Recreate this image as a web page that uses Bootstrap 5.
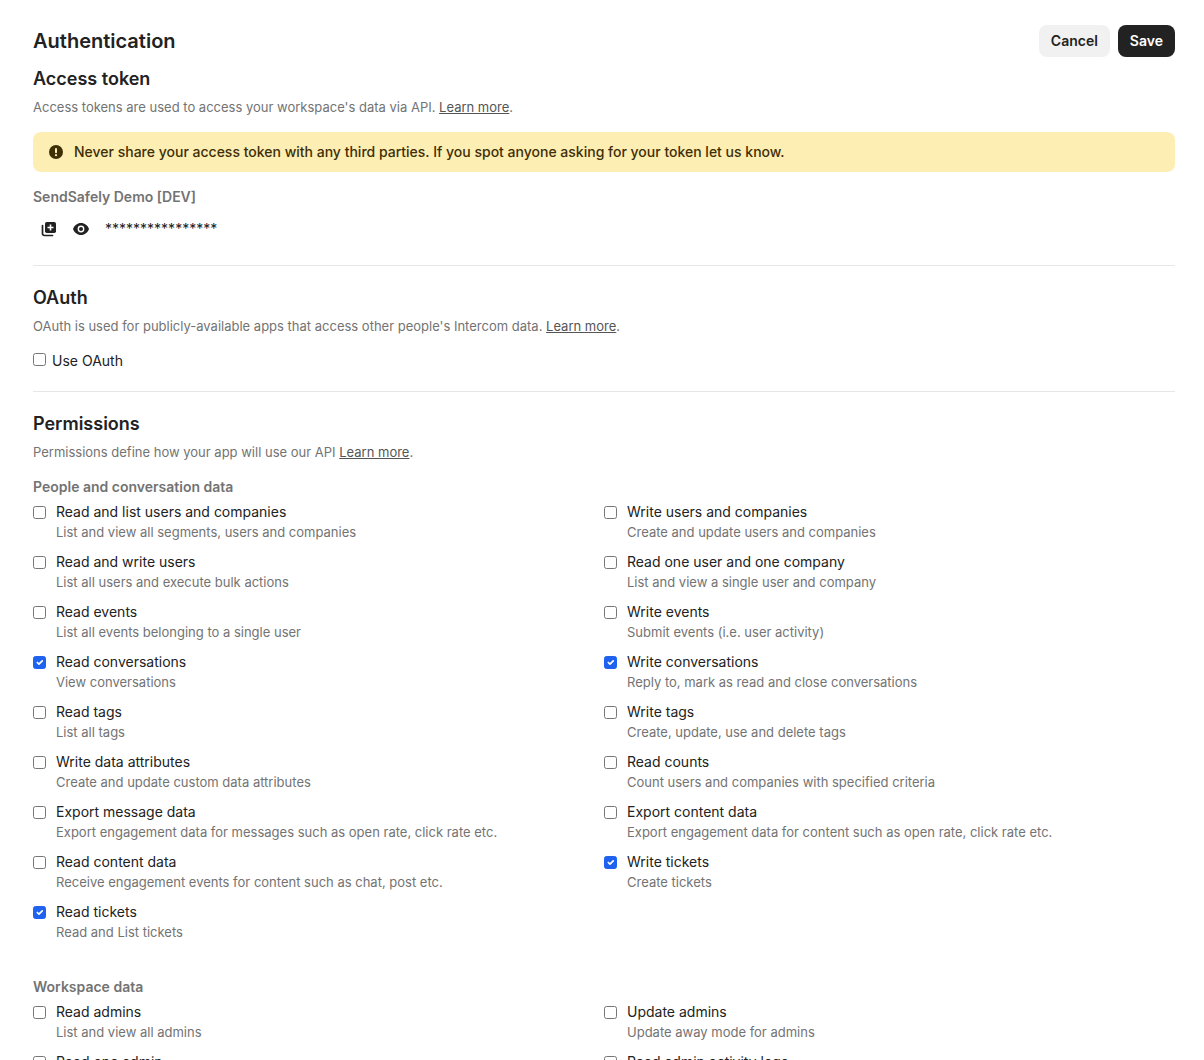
<!DOCTYPE html>
<html lang="en">
<head>
  <meta charset="utf-8" />
  <meta name="viewport" content="width=device-width, initial-scale=1" />
  <title>Authentication</title>
  <link href="https://cdn.jsdelivr.net/npm/bootstrap@5.3.3/dist/css/bootstrap.min.css" rel="stylesheet">
  <style>
    html, body { height: 100%; overflow: hidden; }
    body { font-family: Inter, "Liberation Sans", sans-serif; font-size: 14px; line-height: 20px; color: #222; background: #fff; }
    .page-wrap { padding: 25px 29px 0 33px; }
    .page-title { font-size: 20px; line-height: 32px; font-weight: 600; margin: 0; }
    .btn-cancel, .btn-save { font-size: 14px; font-weight: 600; line-height: 20px; padding: 6px 12px; border-radius: 8px; border: 0; height: 32px; }
    .btn-cancel { background: #f1f1f1; color: #222; }
    .btn-save { background: #222; color: #fff; }
    .section-title { font-size: 18px; line-height: 24px; font-weight: 600; margin: 0; }
    .section-help { font-size: 13px; line-height: 20px; color: #737373; margin: 6px 0 0; }
    .section-help a { color: #555; }
    .token-warning { background: #fdeeb4; color: #3f2f06; border-radius: 8px; height: 40px; padding: 0 16px; margin-top: 15px; font-weight: 500; gap: 11px; }
    .workspace-name { font-weight: 600; color: #737373; margin-top: 15px; }
    .token-row { height: 24px; margin-top: 10px; padding-left: 8px; gap: 16px; }
    .token-stars { font-size: 14px; margin-left: 0; color: #222; }
    .divider { border: 0; border-top: 1px solid #e6e6e6; opacity: 1; margin: 0; }
    .group-title { font-weight: 600; color: #737373; }
    .perm-box.form-check-input { width: 13px; height: 13px; margin: 0; flex: none; border: 1px solid #767676; border-radius: 2.5px; }
    .perm-box.form-check-input:checked { background-color: #1f62f0; border-color: #1f62f0; }
    .perm-item { height: 50px; gap: 10px; }
    .perm-item .perm-box { margin-top: 4px; }
    .perm-name { display: block; line-height: 20px; color: #222; }
    .perm-desc { display: block; font-size: 13px; line-height: 20px; color: #737373; }
  </style>
</head>
<body>
  <div class="page-wrap">
    <header class="d-flex justify-content-between align-items-center">
      <h1 class="page-title">Authentication</h1>
      <div class="d-flex gap-2 me-0">
        <button type="button" class="btn btn-cancel">Cancel</button>
        <button type="button" class="btn btn-save">Save</button>
      </div>
    </header>

    <section style="margin-top:10px">
      <h2 class="section-title">Access token</h2>
      <p class="section-help">Access tokens are used to access your workspace's data via API. <a href="#">Learn more</a>.</p>
      <div class="token-warning d-flex align-items-center">
        <svg width="14" height="14" viewBox="0 0 14 14"><circle cx="7" cy="7" r="7" fill="#3f2f06"/><rect x="6" y="3" width="2" height="5.2" rx="1" fill="#fdeeb4"/><circle cx="7" cy="10.2" r="1.1" fill="#fdeeb4"/></svg>
        <span>Never share your access token with any third parties. If you spot anyone asking for your token let us know.</span>
      </div>
      <div class="workspace-name">SendSafely Demo [DEV]</div>
      <div class="token-row d-flex align-items-center">
        <svg width="16" height="16" viewBox="0 0 16 16"><path d="M1.5 4.5v8.2A1.8 1.8 0 0 0 3.3 14.500h8.200" fill="none" stroke="#222" stroke-width="1.700" stroke-linecap="round"/><rect x="4" y="1" width="11" height="11" rx="1.800" fill="#222"/><path d="M9.500 3.500v6M6.500 6.500h6" stroke="#fff" stroke-width="1.600"/></svg>
        <svg width="16" height="12" viewBox="0 0 16 12"><path d="M8 0C4.300 0 1.300 2.400 0 6c1.300 3.600 4.300 6 8 6s6.700-2.400 8-6c-1.300-3.600-4.300-6-8-6z" fill="#222"/><circle cx="8" cy="6" r="3.400" fill="#fff"/><circle cx="8" cy="6" r="2" fill="#222"/></svg>
        <span class="token-stars">****************</span>
      </div>
    </section>

    <hr class="divider" style="margin-top:24px">

    <section style="margin-top:20px">
      <h2 class="section-title">OAuth</h2>
      <p class="section-help">OAuth is used for publicly-available apps that access other people's Intercom data. <a href="#">Learn more</a>.</p>
      <label class="d-flex align-items-start" style="margin-top:15px;gap:6px">
        <input class="form-check-input perm-box" type="checkbox" style="margin-top:2px">
        <span>Use OAuth</span>
      </label>
    </section>

    <hr class="divider" style="margin-top:20px">

    <section style="margin-top:20px">
      <h2 class="section-title">Permissions</h2>
      <p class="section-help">Permissions define how your app will use our API <a href="#">Learn more</a>.</p>

      <div class="group-title" style="margin-top:15px;margin-bottom:5px">People and conversation data</div>
      <div class="row g-0">
        <div class="col-6"><label class="perm-item d-flex"><input class="form-check-input perm-box" type="checkbox"><span><span class="perm-name">Read and list users and companies</span><span class="perm-desc">List and view all segments, users and companies</span></span></label></div>
        <div class="col-6"><label class="perm-item d-flex"><input class="form-check-input perm-box" type="checkbox"><span><span class="perm-name">Write users and companies</span><span class="perm-desc">Create and update users and companies</span></span></label></div>
        <div class="col-6"><label class="perm-item d-flex"><input class="form-check-input perm-box" type="checkbox"><span><span class="perm-name">Read and write users</span><span class="perm-desc">List all users and execute bulk actions</span></span></label></div>
        <div class="col-6"><label class="perm-item d-flex"><input class="form-check-input perm-box" type="checkbox"><span><span class="perm-name">Read one user and one company</span><span class="perm-desc">List and view a single user and company</span></span></label></div>
        <div class="col-6"><label class="perm-item d-flex"><input class="form-check-input perm-box" type="checkbox"><span><span class="perm-name">Read events</span><span class="perm-desc">List all events belonging to a single user</span></span></label></div>
        <div class="col-6"><label class="perm-item d-flex"><input class="form-check-input perm-box" type="checkbox"><span><span class="perm-name">Write events</span><span class="perm-desc">Submit events (i.e. user activity)</span></span></label></div>
        <div class="col-6"><label class="perm-item d-flex"><input class="form-check-input perm-box" type="checkbox" checked><span><span class="perm-name">Read conversations</span><span class="perm-desc">View conversations</span></span></label></div>
        <div class="col-6"><label class="perm-item d-flex"><input class="form-check-input perm-box" type="checkbox" checked><span><span class="perm-name">Write conversations</span><span class="perm-desc">Reply to, mark as read and close conversations</span></span></label></div>
        <div class="col-6"><label class="perm-item d-flex"><input class="form-check-input perm-box" type="checkbox"><span><span class="perm-name">Read tags</span><span class="perm-desc">List all tags</span></span></label></div>
        <div class="col-6"><label class="perm-item d-flex"><input class="form-check-input perm-box" type="checkbox"><span><span class="perm-name">Write tags</span><span class="perm-desc">Create, update, use and delete tags</span></span></label></div>
        <div class="col-6"><label class="perm-item d-flex"><input class="form-check-input perm-box" type="checkbox"><span><span class="perm-name">Write data attributes</span><span class="perm-desc">Create and update custom data attributes</span></span></label></div>
        <div class="col-6"><label class="perm-item d-flex"><input class="form-check-input perm-box" type="checkbox"><span><span class="perm-name">Read counts</span><span class="perm-desc">Count users and companies with specified criteria</span></span></label></div>
        <div class="col-6"><label class="perm-item d-flex"><input class="form-check-input perm-box" type="checkbox"><span><span class="perm-name">Export message data</span><span class="perm-desc">Export engagement data for messages such as open rate, click rate etc.</span></span></label></div>
        <div class="col-6"><label class="perm-item d-flex"><input class="form-check-input perm-box" type="checkbox"><span><span class="perm-name">Export content data</span><span class="perm-desc">Export engagement data for content such as open rate, click rate etc.</span></span></label></div>
        <div class="col-6"><label class="perm-item d-flex"><input class="form-check-input perm-box" type="checkbox"><span><span class="perm-name">Read content data</span><span class="perm-desc">Receive engagement events for content such as chat, post etc.</span></span></label></div>
        <div class="col-6"><label class="perm-item d-flex"><input class="form-check-input perm-box" type="checkbox" checked><span><span class="perm-name">Write tickets</span><span class="perm-desc">Create tickets</span></span></label></div>
        <div class="col-6"><label class="perm-item d-flex"><input class="form-check-input perm-box" type="checkbox" checked><span><span class="perm-name">Read tickets</span><span class="perm-desc">Read and List tickets</span></span></label></div>
      </div>

      <div class="group-title" style="margin-top:25px;margin-bottom:5px">Workspace data</div>
      <div class="row g-0">
        <div class="col-6"><label class="perm-item d-flex"><input class="form-check-input perm-box" type="checkbox"><span><span class="perm-name">Read admins</span><span class="perm-desc">List and view all admins</span></span></label></div>
        <div class="col-6"><label class="perm-item d-flex"><input class="form-check-input perm-box" type="checkbox"><span><span class="perm-name">Update admins</span><span class="perm-desc">Update away mode for admins</span></span></label></div>
        <div class="col-6"><label class="perm-item d-flex"><input class="form-check-input perm-box" type="checkbox"><span><span class="perm-name">Read one admin</span><span class="perm-desc">View a single admin</span></span></label></div>
        <div class="col-6"><label class="perm-item d-flex"><input class="form-check-input perm-box" type="checkbox"><span><span class="perm-name">Read admin activity logs</span><span class="perm-desc">View admin activity logs</span></span></label></div>
      </div>
    </section>
  </div>
</body>
</html>
